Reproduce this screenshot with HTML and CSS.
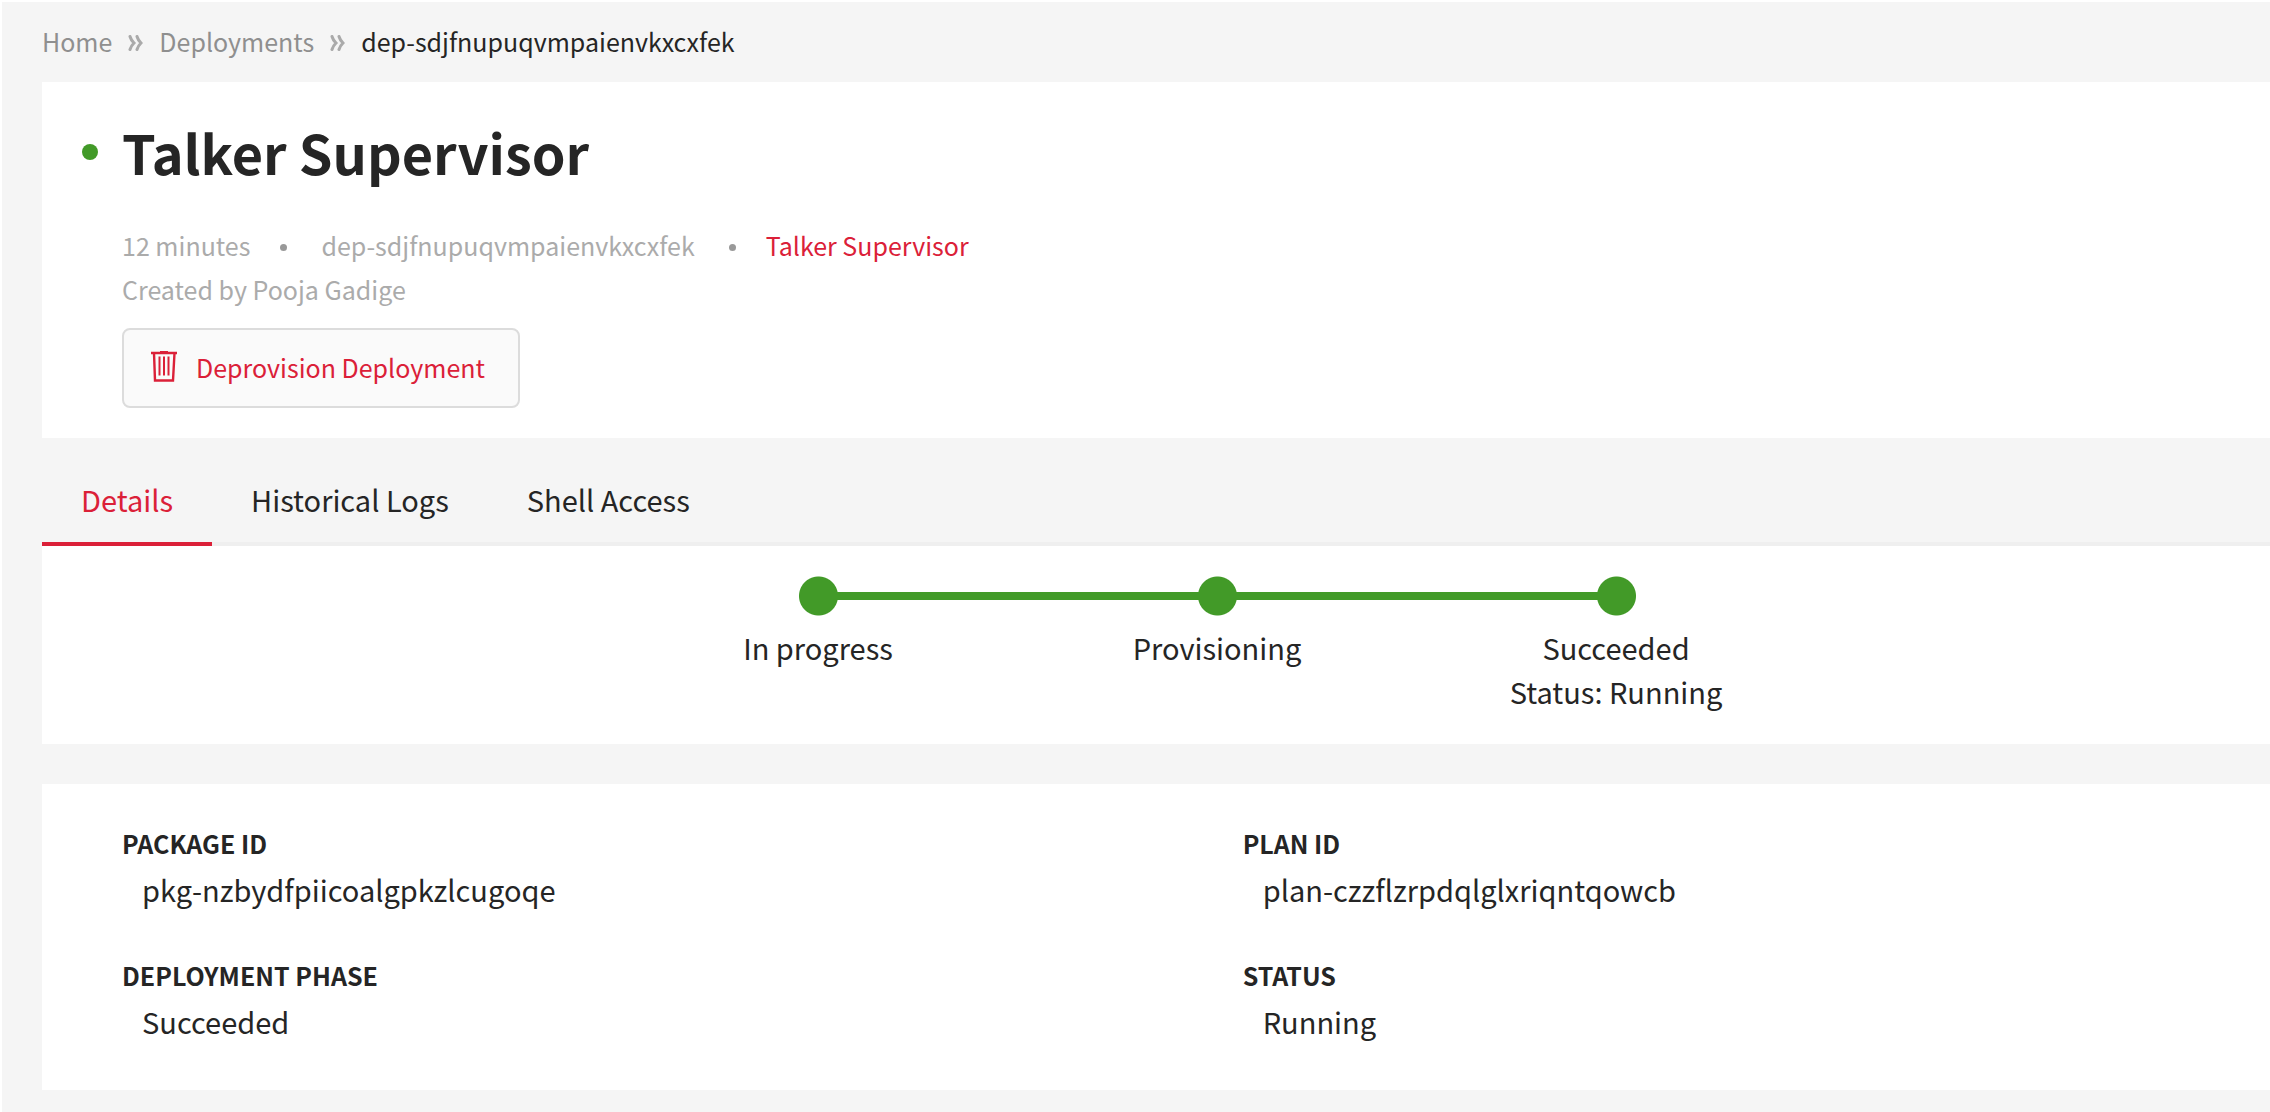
FILE: index.html
```html
<!DOCTYPE html>
<html lang="en">
<head>
  <meta charset="utf-8">
  <title>Talker Supervisor</title>
  <link rel="stylesheet" href="styles.css">
</head>
<body>
  <nav class="breadcrumbs" aria-label="Breadcrumb">
    <a class="crumb" href="#">Home</a>
    <svg class="crumb-separator" width="15" height="16" viewBox="0 0 15 16" aria-hidden="true">
      <path d="M2 1.500Q3 5 6 8Q3 11 2 14.500M9 1.500Q10 5 13 8Q10 11 9 14.500"/>
    </svg>
    <a class="crumb" href="#">Deployments</a>
    <svg class="crumb-separator" width="15" height="16" viewBox="0 0 15 16" aria-hidden="true">
      <path d="M2 1.500Q3 5 6 8Q3 11 2 14.500M9 1.500Q10 5 13 8Q10 11 9 14.500"/>
    </svg>
    <span class="crumb-current">dep-sdjfnupuqvmpaienvkxcxfek</span>
  </nav>

  <main class="content">
    <header class="panel summary">
      <div class="title-row">
        <span class="status-dot"></span>
        <h1 class="title">Talker Supervisor</h1>
      </div>
      <div class="summary-body">
        <div class="meta">
          <span>12 minutes</span>
          <span class="meta-dot"></span>
          <span class="meta-id">dep-sdjfnupuqvmpaienvkxcxfek</span>
          <span class="meta-dot"></span>
          <a class="meta-link" href="#">Talker Supervisor</a>
        </div>
        <p class="author">Created by Pooja Gadige</p>
        <button class="deprovision" type="button">
          <svg class="trash-icon" width="26" height="32" viewBox="0 0 26 32" fill="none" stroke="currentColor" stroke-width="2.400" aria-hidden="true">
            <path d="M0 2H26M9 1H17"/>
            <path d="M3 2L4 29.500H22L23.500 2"/>
            <path d="M8.500 5.500V24.500M13 5.500V24.500M17.500 5.500V24.500" stroke-width="2"/>
          </svg>
          Deprovision Deployment
        </button>
      </div>
    </header>

    <nav class="tabs">
      <a class="tab tab-active" href="#">Details</a>
      <a class="tab" href="#">Historical Logs</a>
      <a class="tab" href="#">Shell Access</a>
    </nav>

    <section class="panel progress">
      <ol class="steps">
        <li class="step"><span class="step-marker"></span>In progress</li>
        <li class="step"><span class="step-marker"></span>Provisioning</li>
        <li class="step"><span class="step-marker"></span>Succeeded<br>Status: Running</li>
      </ol>
    </section>

    <section class="panel">
      <dl class="details">
        <div><dt class="label">PACKAGE ID</dt><dd class="value">pkg-nzbydfpiicoalgpkzlcugoqe</dd></div>
        <div><dt class="label">PLAN ID</dt><dd class="value">plan-czzflzrpdqlglxriqntqowcb</dd></div>
        <div><dt class="label">DEPLOYMENT PHASE</dt><dd class="value">Succeeded</dd></div>
        <div><dt class="label">STATUS</dt><dd class="value">Running</dd></div>
      </dl>
    </section>
  </main>
</body>
</html>
```
FILE: styles.css
```css
* {
  box-sizing: border-box;
}

body {
  min-height: 100vh;
  margin: 0;
  border-top: 2px solid #fff;
  border-left: 2px solid #fff;
  background: #f5f5f5;
  color: #252525;
  font-family: "Noto Sans CJK SC", "Noto Sans", sans-serif;
  font-size: 25px;
  line-height: 44px;
}

a {
  color: inherit;
  text-decoration: none;
}

.breadcrumbs {
  display: flex;
  align-items: center;
  gap: 16px;
  padding: 17px 40px 19px;
}

.crumb {
  color: #8f8f8f;
}

.crumb-separator {
  margin-top: 4px;
  fill: none;
  stroke: #aaa;
  stroke-linecap: round;
  stroke-width: 3;
}

.content {
  padding-left: 40px;
}

.panel {
  background: #fff;
}

.summary {
  padding: 30px 40px;
}

.title-row {
  display: flex;
  align-items: center;
  gap: 24px;
}

.status-dot {
  width: 16px;
  height: 16px;
  border-radius: 50%;
  background: #429a28;
}

.title {
  margin: 0;
  font-size: 54px;
  font-weight: 700;
  line-height: 80px;
}

.summary-body {
  padding: 31px 0 0 40px;
  color: #ababab;
}

.meta {
  display: flex;
  align-items: center;
  gap: 30px;
}

.meta-dot {
  width: 7px;
  height: 7px;
  margin-top: 4px;
  border-radius: 50%;
  background: #999;
}

.meta-id {
  padding: 0 4px;
}

.meta-link {
  color: #db2038;
}

.author {
  margin: 0 0 17px;
}

.deprovision {
  display: flex;
  align-items: center;
  gap: 19px;
  height: 80px;
  padding: 0 33px 2px 27px;
  border: 2px solid #dcdcdc;
  border-radius: 8px;
  background: #fafafa;
  color: #db2038;
  font: inherit;
}

.tabs {
  display: flex;
  margin-top: 39px;
  box-shadow: inset 0 -4px #efefef;
  font-size: 29px;
}

.tab {
  padding: 0 39px 21px;
  border-bottom: 4px solid transparent;
}

.tab-active {
  border-color: #db2038;
  color: #db2038;
}

.progress {
  margin-bottom: 40px;
  padding: 30px 0 31px 122px;
}

.steps {
  display: flex;
  justify-content: center;
  margin: 0;
  padding: 0;
  font-size: 29px;
  list-style: none;
  text-align: center;
}

.step {
  width: 399px;
}

/* Each step draws half of the line on either side of its marker. */
.step-marker {
  display: grid;
  grid-template-columns: 1fr 32px 1fr;
  align-items: center;
  height: 40px;
  margin-bottom: 9px;
  background: radial-gradient(circle at center, #429a28 19px, transparent 20px);
}

.step-marker::before,
.step-marker::after {
  grid-row: 1;
  height: 8px;
  content: "";
}

.step-marker::before {
  grid-column: 1;
}

.step-marker::after {
  grid-column: 3;
}

.step:not(:first-child) .step-marker::before,
.step:not(:last-child) .step-marker::after {
  background: #429a28;
}

.details {
  display: grid;
  grid-template-columns: 12fr 11fr;
  row-gap: 40px;
  margin: 0;
  padding: 36px 0 46px 80px;
  line-height: 46px;
}

.label {
  font-weight: 700;
}

.value {
  margin: 0 0 0 20px;
  font-size: 29px;
}
```
